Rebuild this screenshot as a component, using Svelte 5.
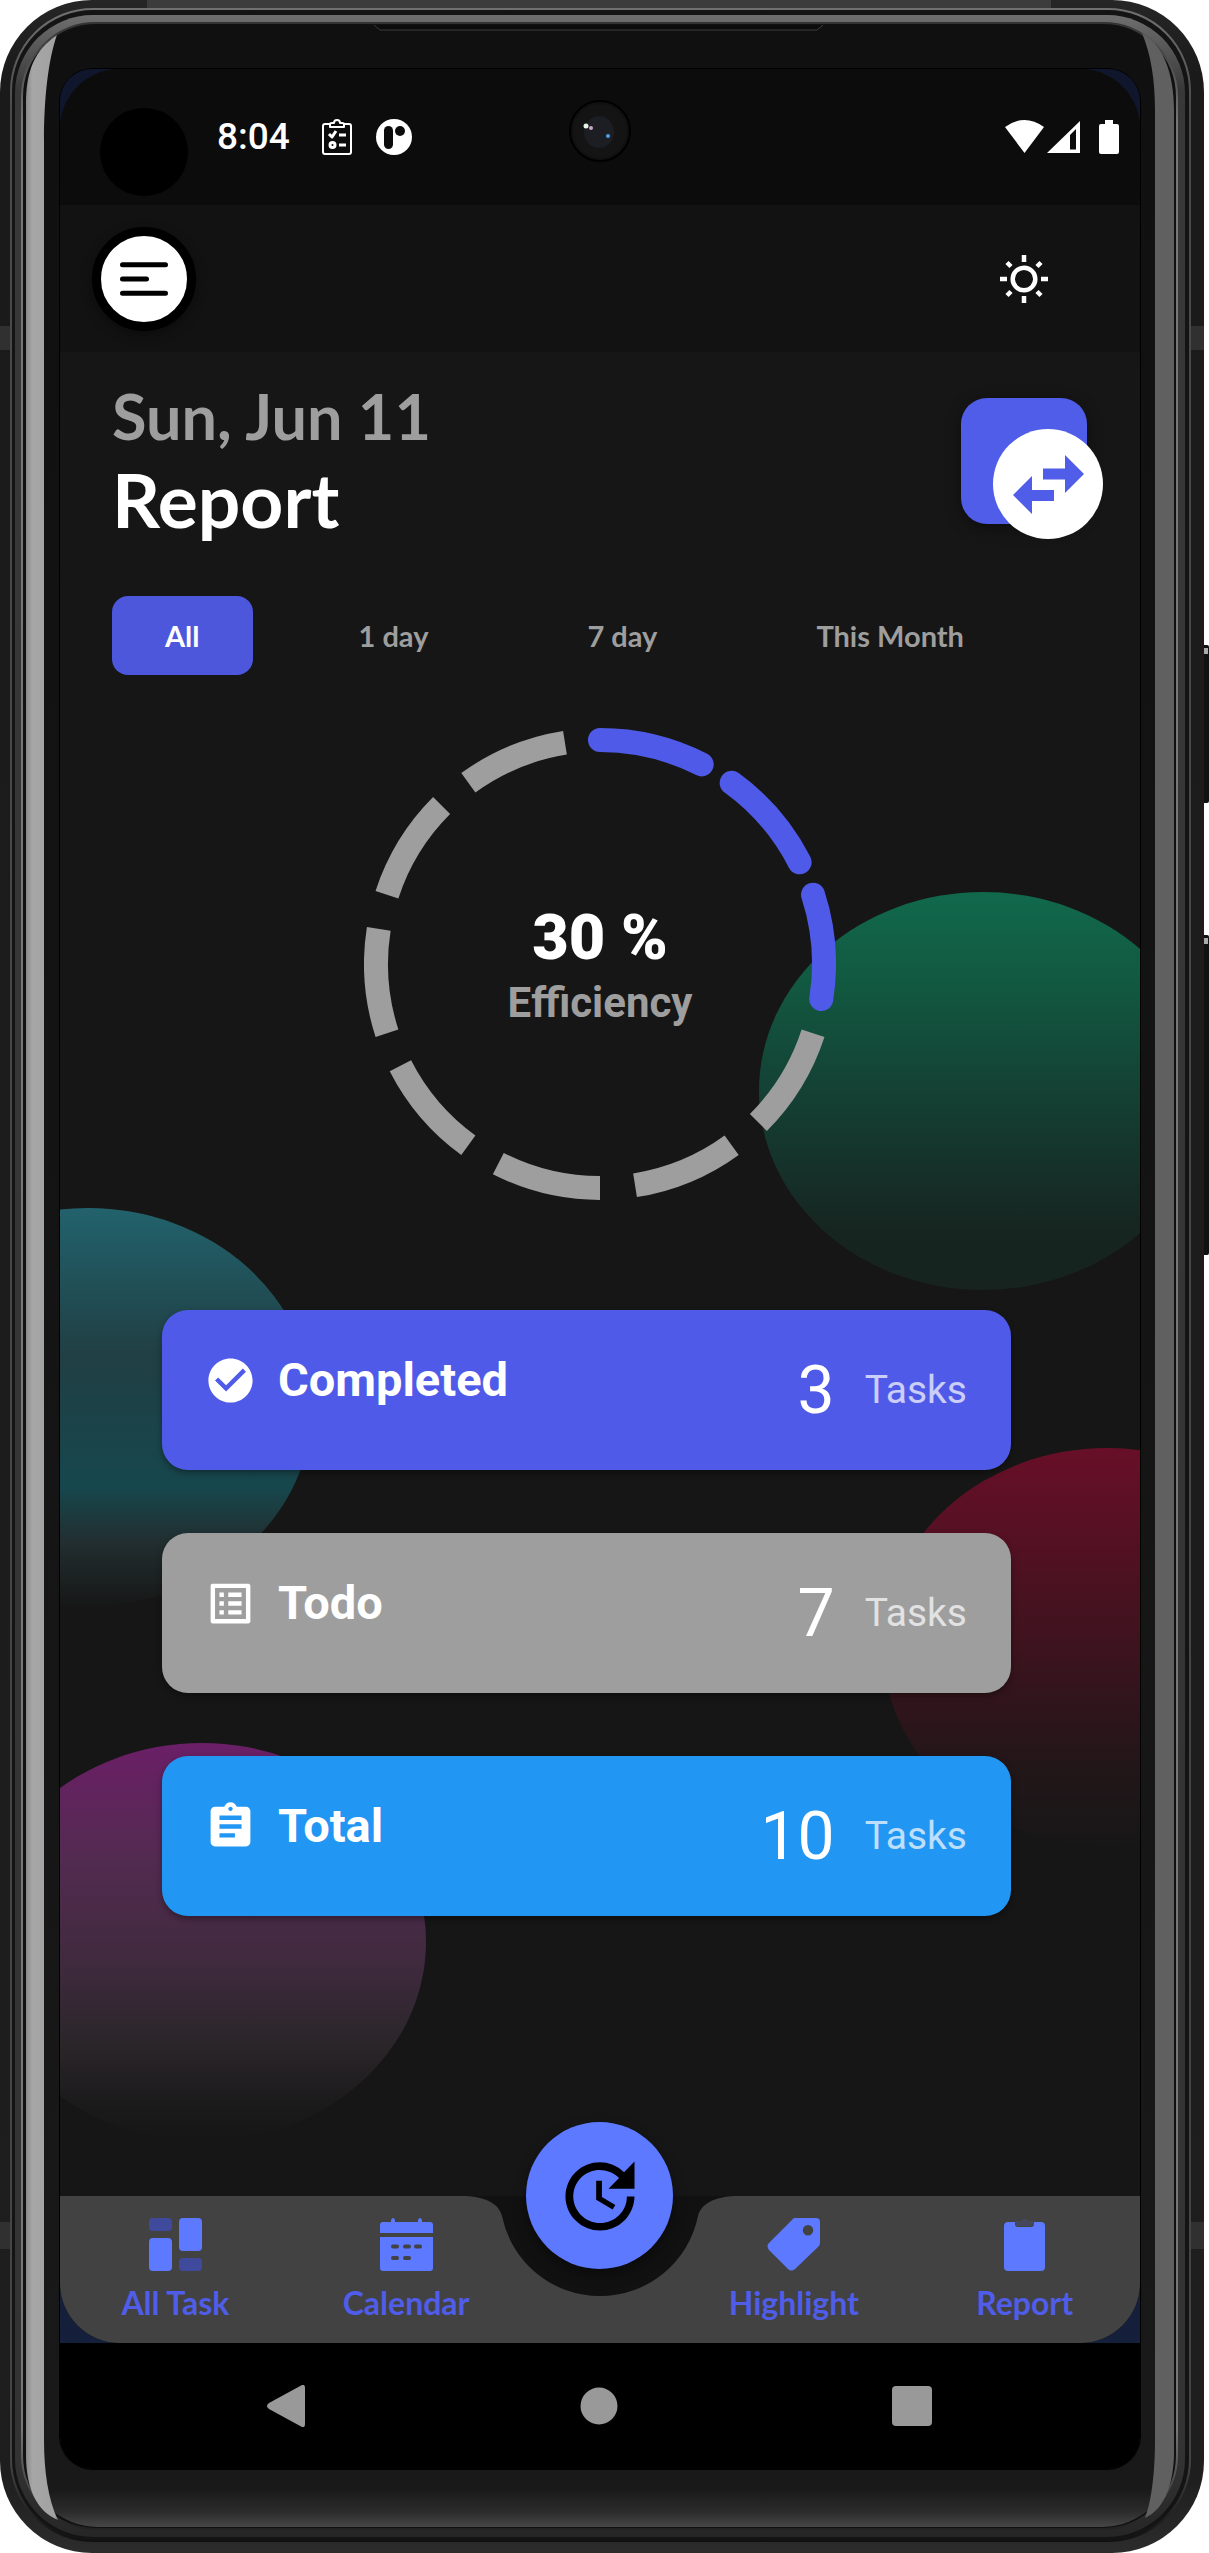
<script>
  const ranges = ['All', '1 day', '7 day', 'This Month'];
  let active = $state('All');

  const stats = [
    { kind: 'completed', label: 'Completed', value: 3 },
    { kind: 'todo', label: 'Todo', value: 7 },
    { kind: 'total', label: 'Total', value: 10 }
  ];

  // Progress ring: ten 27° segments, one every 36°
  const radius = 224;
  const done = 3;
  const point = (deg) => {
    const a = (deg * Math.PI) / 180;
    return `${(236 + radius * Math.sin(a)).toFixed(2)} ${(236 - radius * Math.cos(a)).toFixed(2)}`;
  };
  const segments = Array.from({ length: 10 }, (_, i) => ({
    d: `M${point(i * 36)}A${radius} ${radius} 0 0 1 ${point(i * 36 + 27)}`,
    filled: i < done
  }));
</script>

<div class="stage">
  <svg class="frame" viewBox="0 0 1209 2553" preserveAspectRatio="none" aria-hidden="true">
    <defs>
      <linearGradient id="shell" x1="0" x2="0" y1="0" y2="1">
        <stop offset="0" stop-color="#262626" />
        <stop offset="0.03" stop-color="#1a1a1a" />
        <stop offset="0.97" stop-color="#1e1e1e" />
        <stop offset="1" stop-color="#2c2c2c" />
      </linearGradient>
      <linearGradient id="band" x1="0" x2="0" y1="0" y2="1">
        <stop offset="0" stop-color="#6e6e6e" />
        <stop offset="0.008" stop-color="#606060" />
        <stop offset="0.03" stop-color="#383838" />
        <stop offset="0.97" stop-color="#333" />
        <stop offset="1" stop-color="#262626" />
      </linearGradient>
      <linearGradient id="line" x1="0" x2="0" y1="0" y2="1">
        <stop offset="0" stop-color="#707070" />
        <stop offset="0.04" stop-color="#4a4a4a" />
        <stop offset="0.97" stop-color="#444" />
        <stop offset="1" stop-color="#111" />
      </linearGradient>
      <linearGradient id="inner" x1="0" x2="0" y1="0" y2="1">
        <stop offset="0" stop-color="#333" />
        <stop offset="0.04" stop-color="#777" />
        <stop offset="0.96" stop-color="#777" />
        <stop offset="1" stop-color="#222" />
      </linearGradient>
      <linearGradient id="face" x1="0" x2="0" y1="0" y2="1">
        <stop offset="0" stop-color="#101010" />
        <stop offset="0.5" stop-color="#141414" />
        <stop offset="0.985" stop-color="#191919" />
        <stop offset="0.994" stop-color="#2c2c2c" />
        <stop offset="1" stop-color="#464646" />
      </linearGradient>
      <linearGradient id="chrome" x1="0" x2="1" y1="0" y2="0">
        <stop offset="0" stop-color="#8a8a8a" />
        <stop offset="0.2" stop-color="#a6a6a6" />
        <stop offset="0.9" stop-color="#a2a2a2" />
        <stop offset="1" stop-color="#777" />
      </linearGradient>
    </defs>
    <rect x="1202" y="645" width="7" height="158" rx="2" fill="#111" />
    <rect x="1203" y="648" width="5" height="6" fill="#aaa" />
    <rect x="1202" y="935" width="7" height="320" rx="2" fill="#111" />
    <rect x="1203" y="938" width="5" height="6" fill="#aaa" />
    <rect width="1204" height="2553" rx="92" fill="url(#shell)" />
    <rect x="147" width="904" height="8" fill="#3c3c3c" />
    <path d="M0 326H11V350H0ZM1190 326H1204V350H1190ZM0 2222H10V2249H0ZM1190 2222H1204V2249H1190Z" fill="#303030" />
    <rect x="11" y="9" width="1179" height="2532" rx="82" fill="#141414" stroke="url(#line)" stroke-width="2" />
    <rect x="15" y="15" width="1170" height="2522" rx="78" fill="url(#band)" />
    <rect x="22" y="23" width="1155" height="2506" rx="74" fill="#111" stroke="url(#inner)" stroke-width="2" />
    <rect x="26" y="25" width="1148" height="2502" rx="72" fill="url(#face)" />
    <path d="M374 25H821L817 30H380Z" fill="#0c0c0c" />
    <path d="M374 25L380 30H817L823 25" fill="none" stroke="#3a3a3a" />
    <path d="M57 35C35 50 26 70 26 105V2455C26 2490 38 2512 58 2520C48 2500 44 2470 44 2440V140C44 100 48 60 57 35Z" fill="url(#chrome)" />
    <path d="M1142 33C1164 45 1174 75 1174 110V2455C1173 2490 1162 2510 1145 2518C1152 2500 1155 2470 1155 2440V110C1155 80 1151 55 1142 33Z" fill="#606060" />
    <rect x="59" y="68" width="1082" height="2402" rx="34" fill="#000" />
  </svg>

  <div class="screen">
    <div class="app">
      <div class="status">
        <span class="cutout"></span>
        <time>8:04</time>
        <svg class="clip" width="30" height="36" viewBox="0 0 30 36" fill="none" stroke="#fff" stroke-width="2" stroke-linejoin="round">
          <path d="M8 5H3Q1 5 1 7V33Q1 35 3 35H27Q29 35 29 33V7Q29 5 27 5H22" />
          <path d="M8 8V5Q8 4 10 4H12Q12 1 15 1T18 4H20Q22 4 22 5V8Z" />
          <path d="M7 15L10 18L14 12M17 16H24M17 26H24" stroke-width="3" />
          <circle cx="10.500" cy="26" r="2.500" stroke-width="3" />
        </svg>
        <svg width="36" height="36" viewBox="0 0 36 36">
          <circle cx="18" cy="18" r="18" fill="#fff" />
          <rect x="8" y="7" width="9" height="23" rx="4.500" fill="#0c0c0c" />
          <circle cx="24" cy="12" r="5" fill="#0c0c0c" />
        </svg>
        <span class="camera">
          <svg width="62" height="62" viewBox="0 0 62 62">
            <circle cx="31" cy="31" r="30" fill="#101010" stroke="#000" stroke-width="2" />
            <circle cx="31" cy="31" r="27" fill="#141414" />
            <ellipse cx="30" cy="32" rx="15" ry="16" fill="#1d1e24" />
            <circle cx="17" cy="26" r="2.500" fill="#e8f5e8" />
            <circle cx="22" cy="28" r="2" fill="#c9a5c6" />
            <circle cx="39" cy="36" r="2" fill="#4ba0e8" />
          </svg>
        </span>
        <span class="grow"></span>
        <svg width="39" height="34" viewBox="0 0 39 34"><path d="M0 7Q19.500 -7 39 7L19.500 33Z" fill="#fff" /></svg>
        <svg class="signal" width="33" height="34" viewBox="0 0 33 34">
          <path d="M33 1V33H0Z" fill="#fff" />
          <path d="M23 15L29 9V29.500H23Z" fill="#0c0c0c" />
        </svg>
        <svg class="battery" width="20" height="34" viewBox="0 0 20 34">
          <path d="M6 0H14V4H18Q20 4 20 6V32Q20 34 18 34H2Q0 34 0 32V6Q0 4 2 4H6Z" fill="#fff" />
        </svg>
      </div>

      <header class="bar">
        <button class="menu" aria-label="Menu">
          <svg width="48" height="34" viewBox="0 0 48 34" stroke="#000" stroke-width="5" stroke-linecap="round">
            <path d="M2.500 2.700H45.500M2.500 17H26.500M2.500 31.300H45.500" />
          </svg>
        </button>
        <button class="plain" aria-label="Light mode">
          <svg width="50" height="50" viewBox="0 0 50 50" fill="none" stroke="#fff" stroke-width="4.500">
            <circle cx="25" cy="25" r="11.300" />
            <path d="M25 1V8M25 42V49M1 25H8M42 25H49M8 8.500L12 12.500M38 12.500L42 8.500M8 41.500L12 37.500M38 37.500L42 41.500" />
          </svg>
        </button>
      </header>

      <main>
        <svg class="blobs" viewBox="0 0 1080 1844" preserveAspectRatio="none" aria-hidden="true">
          <defs>
            <linearGradient id="green" x1="0" x2="0" y1="0" y2="1">
              <stop offset="0" stop-color="#11694c" />
              <stop offset="0.25" stop-color="#125740" />
              <stop offset="0.5" stop-color="#144134" />
              <stop offset="0.75" stop-color="#162d27" />
              <stop offset="0.85" stop-color="#162520" />
              <stop offset="1" stop-color="#16231f" />
            </linearGradient>
            <linearGradient id="teal" x1="0" x2="0" y1="0" y2="1">
              <stop offset="0" stop-color="#22626c" />
              <stop offset="0.37" stop-color="#203f44" />
              <stop offset="0.7" stop-color="#16474d" />
              <stop offset="0.84" stop-color="#222e30" />
              <stop offset="1" stop-color="#171717" />
            </linearGradient>
            <linearGradient id="red" x1="0" x2="0" y1="0" y2="1">
              <stop offset="0" stop-color="#680f28" />
              <stop offset="0.5" stop-color="#3d131e" />
              <stop offset="0.8" stop-color="#221619" />
              <stop offset="1" stop-color="#171717" />
            </linearGradient>
            <linearGradient id="purple" x1="0" x2="0" y1="0" y2="1">
              <stop offset="0" stop-color="#6b1f67" />
              <stop offset="0.3" stop-color="#522b50" />
              <stop offset="0.55" stop-color="#402a3e" />
              <stop offset="0.75" stop-color="#2b262a" />
              <stop offset="0.9" stop-color="#1c1b1c" />
              <stop offset="1" stop-color="#161616" />
            </linearGradient>
          </defs>
          <ellipse cx="923" cy="739" rx="224" ry="199" fill="url(#green)" />
          <ellipse cx="28" cy="1055" rx="224" ry="199" fill="url(#teal)" />
          <ellipse cx="1047" cy="1295" rx="224" ry="199" fill="url(#red)" />
          <ellipse cx="142" cy="1590" rx="224" ry="199" fill="url(#purple)" />
        </svg>

        <section class="heading">
          <div>
            <p class="date">Sun, Jun 11</p>
            <h1>Report</h1>
          </div>
          <button class="swap" aria-label="Switch view">
            <span class="disc">
              <svg width="71" height="59" viewBox="0 0 71 59" fill="#4f5de8">
                <path d="M52 0L71 19L52 38V24.500H30V13.500H52ZM19 21L0 40L19 59V46H41V35H19Z" />
              </svg>
            </span>
          </button>
        </section>

        <nav class="ranges" aria-label="Period">
          {#each ranges as range}
            <button class:active={active === range} onclick={() => (active = range)}>{range}</button>
          {/each}
        </nav>

        <section class="ring">
          <svg width="472" height="472" viewBox="0 0 472 472" fill="none" stroke-width="24" aria-hidden="true">
            {#each segments as s}
              <path d={s.d} stroke={s.filled ? '#4f5be8' : '#9e9e9e'} stroke-linecap={s.filled ? 'round' : 'butt'} />
            {/each}
          </svg>
          <div class="reading">
            <strong>30 %</strong>
            <span>Efficiency</span>
          </div>
        </section>

        <section class="cards">
          {#each stats as s}
            <article class="card {s.kind}">
              <div class="name">
                <svg width="53" height="53" viewBox="0 0 24 24" fill="#fff">
                  {#if s.kind === 'completed'}
                    <path d="M12 2C6.480 2 2 6.480 2 12s4.480 10 10 10 10-4.480 10-10S17.520 2 12 2zm-2 15l-5-5 1.410-1.410L10 14.170l7.590-7.590L19 8l-9 9z" />
                  {:else if s.kind === 'todo'}
                    <path d="M19 5v14H5V5h14m1.100-2H3.900c-.5 0-.9.4-.9.9v16.200c0 .4.4.9.9.9h16.200c.4 0 .9-.5.9-.9V3.900c0-.5-.5-.9-.9-.9zM11 7h6v2h-6V7zm0 4h6v2h-6v-2zm0 4h6v2h-6zM7 7h2v2H7zm0 4h2v2H7zm0 4h2v2H7z" />
                  {:else}
                    <path d="M19 3h-4.180C14.400 1.840 13.300 1 12 1c-1.300 0-2.400.84-2.820 2H5c-1.100 0-2 .9-2 2v14c0 1.100.9 2 2 2h14c1.100 0 2-.9 2-2V5c0-1.100-.9-2-2-2zm-7 0c.55 0 1 .45 1 1s-.45 1-1 1-1-.45-1-1 .45-1 1-1zm2 14H7v-2h7v2zm3-4H7v-2h10v2zm0-4H7V7h10v2z" />
                  {/if}
                </svg>
                <h2>{s.label}</h2>
              </div>
              <p class="count"><span>{s.value}</span><small>Tasks</small></p>
            </article>
          {/each}
        </section>
      </main>

      <footer class="tabs">
        <svg class="notch" viewBox="0 0 1080 147" preserveAspectRatio="none" aria-hidden="true">
          <path d="M0 0H401C426 0 439 8 442 20A100 100 0 0 0 638 20C641 8 654 0 679 0H1080V147H0Z" fill="#424242" />
        </svg>
        <a href="#tasks">
          <svg width="53" height="53" viewBox="0 0 53 53" fill="#5c79ff">
            <rect width="23" height="13" rx="4" fill="#3f4a9c" />
            <rect y="20" width="23" height="33" rx="4" />
            <rect x="30" width="23" height="33" rx="4" />
            <rect x="30" y="40" width="23" height="13" rx="4" fill="#3f4a9c" />
          </svg>
          <span>All Task</span>
        </a>
        <a href="#calendar">
          <svg width="53" height="53" viewBox="0 0 53 53" fill="#5c79ff">
            <path d="M0 15V7Q0 4 3 4H11V2Q13 -2 15 2V4H38V2Q40 -2 42 2V4H50Q53 4 53 7V15ZM0 19H53V50Q53 53 50 53H3Q0 53 0 50Z" />
            <path d="M13 28.500H17M25 28.500H29M36 28.500H40M13 40H17M25 40H29" stroke="#424242" stroke-width="4" stroke-linecap="round" />
          </svg>
          <span>Calendar</span>
        </a>
        <i class="gap"></i>
        <a href="#highlight">
          <svg width="53" height="53" viewBox="0 0 53 53" fill="#5c79ff">
            <path fill-rule="evenodd" d="M28 0H49Q53 0 53 4V25Q53 27 51 29L28 51Q24 54 21 51L2 32Q-1 28 2 25L25 2Q26 0 28 0ZM41 7A5 5 0 0 0 41 17.500A5 5 0 0 0 41 7Z" />
          </svg>
          <span>Highlight</span>
        </a>
        <a href="#report">
          <svg width="53" height="53" viewBox="0 0 53 53" fill="#5c79ff">
            <path d="M10 4H17V6Q17 9 20 9H33Q36 9 36 6V4H43Q47 4 47 8V49Q47 53 43 53H10Q6 53 6 49V8Q6 4 10 4Z" />
            <path d="M17 3H23Q26.500 -2 30 3H36V5Q36 8 33 8H20Q17 8 17 5Z" fill="#46465c" />
          </svg>
          <span>Report</span>
        </a>
        <button class="fab" aria-label="Update">
          <svg width="92" height="92" viewBox="0 0 24 24">
            <path d="M21 10.120h-6.780l2.740-2.820c-2.730-2.700-7.150-2.800-9.880-.1-2.730 2.710-2.730 7.080 0 9.790s7.150 2.710 9.880 0C18.320 15.650 19 14.080 19 12.100h2c0 1.980-.88 4.550-2.640 6.290-3.510 3.480-9.210 3.480-12.720 0-3.500-3.470-3.530-9.110-.02-12.580s9.140-3.470 12.650 0L21 3v7.120zM12.500 8v4.250l3.500 2.080-.72 1.210L11 13V8h1.500z" />
          </svg>
        </button>
      </footer>
    </div>

    <nav class="system" aria-label="System">
      <button class="plain" aria-label="Back">
        <svg width="40" height="42" viewBox="0 0 40 42"><path d="M36 0Q39 -1 39 3V39Q39 43 36 42L3 24Q-1 21 3 18Z" fill="#999" /></svg>
      </button>
      <button class="plain" aria-label="Home">
        <svg width="40" height="42" viewBox="0 0 40 42"><circle cx="20" cy="21" r="18.500" fill="#999" /></svg>
      </button>
      <button class="plain" aria-label="Recents">
        <svg width="40" height="42" viewBox="0 0 40 42"><rect y="1" width="40" height="40" rx="4" fill="#999" /></svg>
      </button>
    </nav>
  </div>
</div>

<style>
  :global(body) {
    margin: 0;
    background: #fff;
  }

  .stage {
    position: relative;
    padding: 69px 69px 84px 60px;
    font-family: Lato, 'Open Sans', sans-serif;
  }
  .frame {
    position: absolute;
    inset: 0;
    width: 100%;
    height: 100%;
  }

  button {
    border: 0;
    padding: 0;
    font: inherit;
    color: inherit;
    cursor: pointer;
  }
  svg {
    display: block;
    flex: none;
  }
  h1,
  h2,
  p {
    margin: 0;
  }
  .plain {
    background: none;
  }

  .screen {
    position: relative;
    overflow: hidden;
    border-radius: 32px;
    background: linear-gradient(#10162b, #15203c);
  }
  .app {
    overflow: hidden;
    border-radius: 60px;
    background: #161616;
  }

  .status {
    position: relative;
    display: flex;
    align-items: center;
    height: 136px;
    padding: 0 21px 0 157px;
    background: #0c0c0c;
    color: #fff;
  }
  .status time {
    margin-right: 32px;
    font: 500 37px/44px Roboto, sans-serif;
  }
  .status .clip {
    margin-right: 24px;
  }
  .grow {
    flex: 1;
  }
  .signal {
    margin-left: 3px;
  }
  .battery {
    margin-left: 19px;
  }
  .cutout {
    position: absolute;
    left: 40px;
    top: 39px;
    width: 88px;
    height: 88px;
    border-radius: 50%;
    background: #000;
  }
  .camera {
    position: absolute;
    left: 50%;
    top: 31px;
    margin-left: -31px;
  }

  .bar {
    display: flex;
    align-items: center;
    justify-content: space-between;
    height: 147px;
    padding: 0 91px 0 32px;
    background: #121212;
  }
  .menu {
    display: grid;
    place-items: center;
    width: 104px;
    height: 104px;
    border: 9px solid #000;
    border-radius: 50%;
    background: #fff;
    box-shadow: 0 4px 12px rgba(0, 0, 0, 0.4);
  }

  main {
    position: relative;
    padding-bottom: 280px;
  }
  .blobs {
    position: absolute;
    inset: 0;
    width: 100%;
    height: 100%;
  }
  main > section,
  main > nav {
    position: relative;
  }

  .heading {
    display: flex;
    justify-content: space-between;
    padding: 24px 37px 0 52px;
    font-weight: 700;
  }
  .date {
    font-size: 63px;
    line-height: 80px;
    color: #9e9e9e;
  }
  h1 {
    font-size: 75px;
    line-height: 87px;
    color: #fff;
  }
  .swap {
    display: flex;
    align-items: flex-start;
    width: 126px;
    height: 126px;
    margin: 22px 16px 0 0;
    padding: 31px 0 0 32px;
    border-radius: 26px;
    background: #4f5de8;
    box-shadow: 0 4px 16px rgba(0, 0, 0, 0.4);
  }
  .disc {
    display: grid;
    flex: none;
    place-items: center;
    width: 110px;
    height: 110px;
    border-radius: 50%;
    background: #fff;
  }

  .ranges {
    display: flex;
    gap: 53px;
    margin-top: 53px;
    padding: 0 52px;
  }
  .ranges button {
    height: 79px;
    padding: 0 53px;
    border-radius: 16px;
    background: none;
    font-size: 29px;
    font-weight: 700;
    white-space: nowrap;
    color: #9e9e9e;
  }
  .ranges .active {
    background: #4c57dc;
    color: #fff;
  }

  .ring {
    display: grid;
    place-items: center;
    margin-top: 53px;
  }
  .ring > * {
    grid-area: 1 / 1;
  }
  .reading {
    display: grid;
    justify-items: center;
    padding-top: 8px;
    font-family: Roboto, sans-serif;
    font-weight: 700;
  }
  .reading strong {
    font-size: 63px;
    line-height: 70px;
    color: #fff;
  }
  .reading span {
    font-size: 42px;
    line-height: 60px;
    color: #9e9e9e;
  }

  .cards {
    display: grid;
    gap: 63px;
    margin: 110px 129px 0 102px;
    font-family: Roboto, sans-serif;
    color: #fff;
  }
  .card {
    display: flex;
    justify-content: space-between;
    height: 160px;
    padding: 0 44px 0 42px;
    border-radius: 26px;
    box-sizing: border-box;
    box-shadow: 0 3px 6px rgba(0, 0, 0, 0.35);
  }
  .completed {
    background: #4f5be8;
  }
  .todo {
    background: #9e9e9e;
  }
  .total {
    background: #2196f3;
  }
  .name {
    display: flex;
    align-items: center;
    gap: 21px;
    height: 140px;
  }
  h2 {
    font-size: 47px;
    line-height: 54px;
  }
  .count {
    display: flex;
    align-items: center;
    gap: 30px;
    font-size: 66px;
  }
  .count small {
    font-size: 39px;
    opacity: 0.7;
  }

  .tabs {
    position: relative;
    display: flex;
    height: 147px;
    background: #111;
  }
  .notch {
    position: absolute;
    inset: 0;
    width: 100%;
    height: 100%;
  }
  .tabs a {
    position: relative;
    display: flex;
    flex: 1;
    flex-direction: column;
    align-items: center;
    gap: 12px;
    padding-top: 22px;
    font-size: 32px;
    font-weight: 700;
    line-height: 40px;
    color: #4f5de8;
    text-decoration: none;
  }
  .gap {
    width: 157px;
  }
  .fab {
    position: absolute;
    left: 50%;
    top: -74px;
    display: grid;
    place-items: center;
    width: 147px;
    height: 147px;
    margin-left: -74px;
    border-radius: 50%;
    background: #5c79ff;
    box-shadow: 0 6px 14px rgba(0, 0, 0, 0.4);
  }

  .system {
    display: flex;
    align-items: center;
    justify-content: space-between;
    height: 126px;
    padding: 0 208px 0 206px;
    background: #000;
  }
</style>
